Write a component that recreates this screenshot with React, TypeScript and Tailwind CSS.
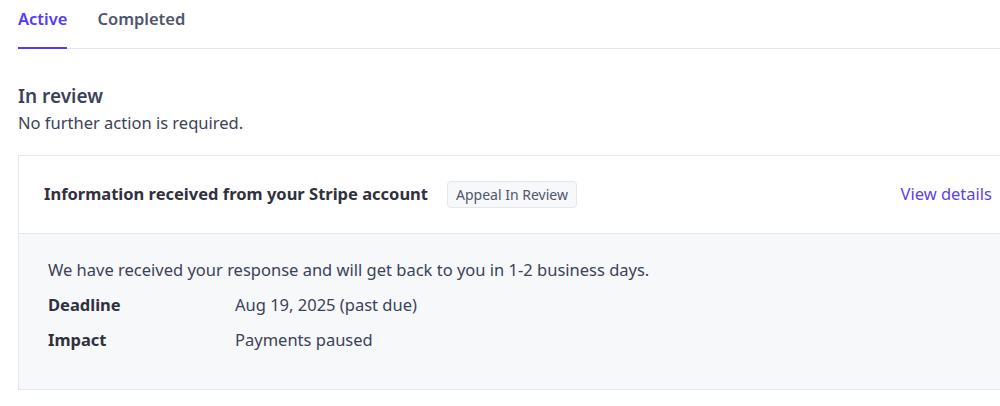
export default function App() {
  return (
    <div className="h-[406px] w-[1000px] overflow-hidden bg-white font-['Noto_Sans',sans-serif] text-[#3c4257]">
      <div className="pl-[18px]">
        {/* Tabs */}
        <div className="flex gap-[30px] border-b border-[#e3e8ee]">
          <button className="-mb-px border-b-2 border-[#533afd] pb-[15px] pt-[7px] text-[16.5px] font-semibold text-[#533afd]">
            Active
          </button>
          <button className="-mb-px border-b-2 border-transparent pb-[15px] pt-[7px] text-[16.5px] font-semibold text-[#4f566b]">
            Completed
          </button>
        </div>

        {/* Section heading */}
        <div className="mt-[34px]">
          <h2 className="text-[19px] font-semibold leading-[26px] text-[#3c4257]">In review</h2>
          <p className="text-[16.5px] leading-[28px] text-[#3c4257]">No further action is required.</p>
        </div>

        {/* Card */}
        <div className="mt-[18px] w-[1010px] border border-[#e3e8ee]">
          <div className="flex h-[77px] items-center justify-between bg-white pl-[25px] pr-[35px]">
            <div className="flex items-center gap-[19px]">
              <span className="text-[16.5px] font-bold text-[#30313d]">
                Information received from your Stripe account
              </span>
              <span className="rounded-[4px] border border-[#e3e8ee] bg-[#f6f8fa] px-[8px] py-[2px] text-[14px] text-[#4f566b]">
                Appeal In Review
              </span>
            </div>
            <a className="text-[16.5px] text-[#5a43e8]">View details</a>
          </div>
          <div className="h-[156px] border-t border-[#e3e8ee] bg-[#f6f8fa] pl-[29px] pt-[24px]">
            <p className="text-[16.5px] leading-[24px] text-[#3c4257]">
              We have received your response and will get back to you in 1-2 business days.
            </p>
            <div className="mt-[11px] grid grid-cols-[187px_1fr] gap-y-[11px] text-[16.5px] leading-[24px]">
              <span className="font-bold text-[#30313d]">Deadline</span>
              <span>Aug 19, 2025 (past due)</span>
              <span className="font-bold text-[#30313d]">Impact</span>
              <span>Payments paused</span>
            </div>
          </div>
        </div>
      </div>
    </div>
  );
}
